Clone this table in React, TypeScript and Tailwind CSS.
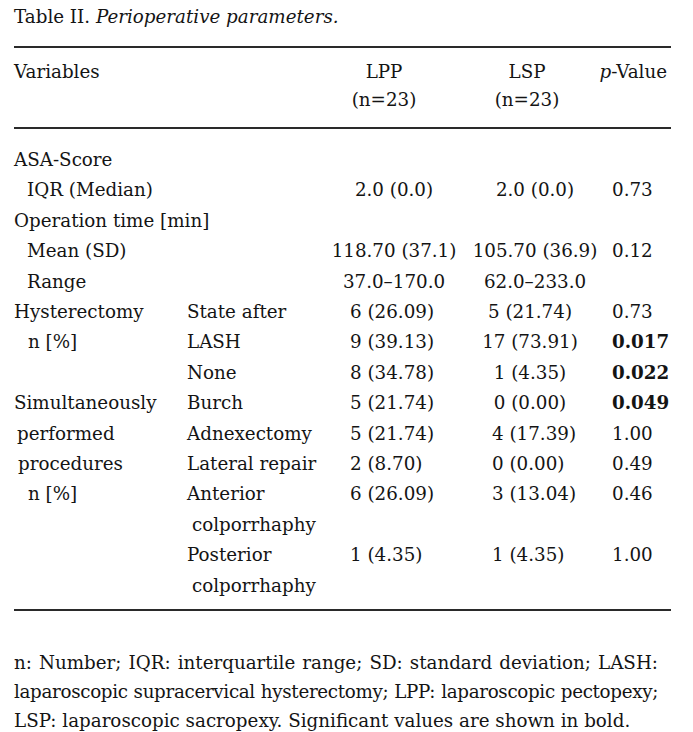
import React from "react";

const C1 = "col-start-1";

type Row = {
  c1?: React.ReactNode;
  c1Indent?: string;
  c2?: React.ReactNode;
  c2Indent?: string;
  lpp?: string;
  lppMode?: "center" | "left";
  lsp?: string;
  lspMode?: "center" | "centerH" | "left";
  p?: string;
  bold?: boolean;
};

const rows: Row[] = [
  { c1: "ASA-Score" },
  { c1: "IQR (Median)", c1Indent: "pl-[13px]", lpp: "2.0 (0.0)", lppMode: "center", lsp: "2.0 (0.0)", lspMode: "center", p: "0.73" },
  { c1: "Operation time [min]" },
  { c1: "Mean (SD)", c1Indent: "pl-[13px]", lpp: "118.70 (37.1)", lppMode: "center", lsp: "105.70 (36.9)", lspMode: "center", p: "0.12" },
  { c1: "Range", c1Indent: "pl-[13px]", lpp: "37.0–170.0", lppMode: "center", lsp: "62.0–233.0", lspMode: "center" },
  { c1: "Hysterectomy", c2: "State after", lpp: "6 (26.09)", lppMode: "left", lsp: "5 (21.74)", lspMode: "centerH", p: "0.73" },
  { c1: "n [%]", c1Indent: "pl-[14px]", c2: "LASH", lpp: "9 (39.13)", lppMode: "left", lsp: "17 (73.91)", lspMode: "centerH", p: "0.017", bold: true },
  { c2: "None", lpp: "8 (34.78)", lppMode: "left", lsp: "1 (4.35)", lspMode: "centerH", p: "0.022", bold: true },
  { c1: "Simultaneously", c2: "Burch", lpp: "5 (21.74)", lppMode: "left", lsp: "0 (0.00)", lspMode: "centerH", p: "0.049", bold: true },
  { c1: "performed", c1Indent: "pl-[3px]", c2: "Adnexectomy", lpp: "5 (21.74)", lppMode: "left", lsp: "4 (17.39)", lspMode: "left", p: "1.00" },
  { c1: "procedures", c1Indent: "pl-[4px]", c2: "Lateral repair", lpp: "2 (8.70)", lppMode: "left", lsp: "0 (0.00)", lspMode: "left", p: "0.49" },
  { c1: "n [%]", c1Indent: "pl-[14px]", c2: "Anterior", lpp: "6 (26.09)", lppMode: "left", lsp: "3 (13.04)", lspMode: "left", p: "0.46" },
  { c2: "colporrhaphy", c2Indent: "pl-[5px]" },
  { c2: "Posterior", lpp: "1 (4.35)", lppMode: "left", lsp: "1 (4.35)", lspMode: "left", p: "1.00" },
  { c2: "colporrhaphy", c2Indent: "pl-[5px]" },
];

function lppCls(m?: string) {
  if (m === "center") return "text-center pr-[14px]";
  return "pl-[20px]";
}
function lspCls(m?: string) {
  if (m === "center") return "text-center";
  if (m === "centerH") return "text-center pr-[10px]";
  return "pl-[20px]";
}

export default function App() {
  return (
    <div
      className="w-[693px] h-[732px] bg-white text-[#141414] text-[18.3px] pl-[14px] pr-[22px]"
      style={{ fontFamily: "'DejaVu Serif', 'Liberation Serif', serif" }}
    >
      <div className="pt-[2px] leading-[30px] whitespace-nowrap">
        Table II. <i>Perioperative parameters.</i>
      </div>
      <div className="mt-[14px] h-[2px] bg-[#2a2a2a]" />
      <div className="grid grid-cols-[173px_143px_142px_126px_1fr] leading-[28px] pt-[10px] pb-[13px]">
        <div className={C1}>Variables</div>
        <div className="col-start-3 text-center pr-[34px]">
          <div>LPP</div>
          <div>(n=23)</div>
        </div>
        <div className="col-start-4 text-center pr-[16px]">
          <div>LSP</div>
          <div>(n=23)</div>
        </div>
        <div className="col-start-5 flex justify-end pr-[4px] whitespace-nowrap">
          <span>
            <i>p</i>-Value
          </span>
        </div>
      </div>
      <div className="h-[2px] bg-[#2a2a2a]" />
      <div className="grid grid-cols-[173px_143px_142px_126px_1fr] leading-[30.4px] pt-[16px] pb-[8px]">
        {rows.map((r, i) => (
          <React.Fragment key={i}>
            <div className={`col-start-1 whitespace-nowrap ${r.c1Indent ?? ""}`}>{r.c1 ?? ""}</div>
            <div className={`col-start-2 whitespace-nowrap ${r.c2Indent ?? ""}`}>{r.c2 ?? ""}</div>
            <div className={`col-start-3 whitespace-nowrap ${lppCls(r.lppMode)}`}>{r.lpp ?? ""}</div>
            <div className={`col-start-4 whitespace-nowrap ${lspCls(r.lspMode)}`}>{r.lsp ?? ""}</div>
            <div className={`col-start-5 whitespace-nowrap pl-[14px] ${r.bold ? "font-bold" : ""}`}>{r.p ?? ""}</div>
          </React.Fragment>
        ))}
      </div>
      <div className="h-[2px] bg-[#2a2a2a]" />
      <div className="mt-[37px] pr-[13px] leading-[29px]">
        <div className="whitespace-nowrap text-justify [text-align-last:justify]">
          n: Number; IQR: interquartile range; SD: standard deviation; LASH:
        </div>
        <div className="whitespace-nowrap tracking-[-0.32px] text-justify [text-align-last:justify]">
          laparoscopic supracervical hysterectomy; LPP: laparoscopic pectopexy;
        </div>
        <div className="whitespace-nowrap">
          LSP: laparoscopic sacropexy. Significant values are shown in bold.
        </div>
      </div>
    </div>
  );
}
